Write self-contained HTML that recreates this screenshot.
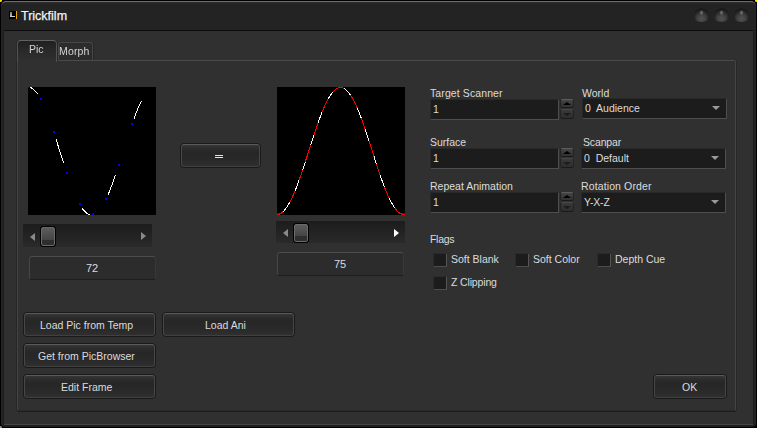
<!DOCTYPE html>
<html><head><meta charset="utf-8">
<style>
*{margin:0;padding:0;box-sizing:border-box}
html,body{width:757px;height:428px;overflow:hidden;background:#000}
#root{position:relative;width:757px;height:428px;background:#000;overflow:hidden;font-family:"Liberation Sans",sans-serif}
.a{position:absolute}
.t{position:absolute;font-size:10.5px;line-height:13px;white-space:pre;color:#dcdcdc}
.win{left:1px;top:1px;width:755px;height:426px;background:linear-gradient(#2e2e2e 0,#232323 2px,#232323);border-radius:5px 5px 4px 4px;border-top:1px solid #6c6c6c}
.content{left:4px;top:31px;width:749px;height:394px;background:#303030;border-bottom:1px solid #444;box-shadow:-1px 0 0 #1c1c1c,1px 0 0 #1e1e1e}
.sep{left:4px;top:30px;width:749px;height:1px;background:#0c0c0c}
.pane{left:17px;top:60px;width:719px;height:351px;border:1px solid #4a4a4a;border-right-color:#454545;border-left-color:#444;border-bottom-color:#2a2a2a;border-radius:2px;box-shadow:-1px 0 0 #262626,1px 0 0 #262626,0 1px 0 #1c1c1c}
.btn{position:absolute;border:1px solid #1a1a1a;border-radius:4px;background:#1a1a1a}
.btn>div{position:absolute;left:0;top:0;right:0;bottom:0;border:1px solid #474747;border-top-color:#5a5a5a;border-bottom-color:#404040;border-radius:3px;background:linear-gradient(#353535 0%,#2a2a2a 20%,#262626 40%,#2a2a2a 75%,#2f2f2f 100%)}
.inp{position:absolute;background:#1c1c1c;border-right:1px solid #4e4e4e;border-bottom:1px solid #4e4e4e;box-shadow:-1px -1px 0 #282828}
.chk{position:absolute;width:13px;height:13px;background:#1c1c1c;border-right:1px solid #555;border-bottom:1px solid #4c4c4c;box-shadow:-1px -1px 0 #2a2a2a}
.track{position:absolute;background:linear-gradient(#1c1c1c,#2a2a2a)}
.thumb{position:absolute;border:1px solid #000;border-radius:3px;background:#000}
.thumb>div{position:absolute;left:0;top:0;right:0;bottom:0;border:1px solid #6a6a6a;border-radius:2px;background:linear-gradient(#5c5c5c 0%,#444 70%,#2e2e2e 70%,#2e2e2e 100%)}
.val{position:absolute;border:1px solid #464646;border-top-color:#4c4c4c;border-bottom-color:#1e1e1e;border-right-color:#383838;border-radius:3px;background:#2c2c2c}
.sphere{position:absolute;width:15px;height:14px;border-radius:50% 50% 42% 42%;background:radial-gradient(ellipse 2.2px 2.6px at 50% 33%,#707070 0,#606060 50%,rgba(60,60,60,0) 100%),radial-gradient(ellipse 8px 7px at 50% 75%,#505050 0%,#474747 40%,#353535 75%,#2a2a2a 100%);box-shadow:inset 0 2px 2px #181818}
</style></head><body><div id="root">
<div class="a win"></div>
<!-- title icon -->
<div class="a" style="left:9px;top:11px;width:8px;height:8px;background:#000"></div>
<div class="a" style="left:10px;top:12px;width:1.6px;height:5px;background:linear-gradient(#7a7a7a,#cfcfcf)"></div>
<div class="a" style="left:10px;top:16px;width:5px;height:1.2px;background:#d0d0d0"></div>
<div class="a" style="left:16px;top:11px;width:1px;height:8px;background:#f0a800"></div>
<div class="t" style="left:21px;top:9px;font-size:12.5px;line-height:14px;color:#f4f4f4;-webkit-text-stroke:0.25px #f4f4f4">Trickfilm</div>
<div class="sphere" style="left:694px;top:8px"></div>
<div class="sphere" style="left:714px;top:8px"></div>
<div class="sphere" style="left:734px;top:8px"></div>
<div class="a sep"></div>
<div class="a content"></div>
<div class="a" style="left:3px;top:425px;width:751px;height:2px;background:#1e1e1e"></div>
<div class="a pane"></div>
<!-- tabs -->
<div class="a" style="left:58px;top:42px;width:35px;height:18px;border:1px solid #464646;border-bottom:none;border-radius:3px 3px 0 0;background:#2c2c2c;box-shadow:1px 0 0 #282828"></div>
<div class="a" style="left:17px;top:40px;width:40px;height:22px;border:1px solid #626262;border-left-color:#525252;border-right-color:#525252;border-bottom:none;border-radius:4px 4px 0 0;background:linear-gradient(#202020,#2a2a2a 50%,#303030);box-shadow:1px 0 0 #282828,-1px 0 0 #282828"></div>
<div class="a" style="left:18px;top:60px;width:38px;height:2px;background:#303030"></div>
<div class="t" style="left:29px;top:43px;color:#d4d4d4;will-change:transform">Pic</div>
<div class="t" style="left:59px;top:45px;color:#d4d4d4;will-change:transform;letter-spacing:0.15px">Morph</div>
<svg width="128" height="128" viewBox="0 0 128 128" style="position:absolute;left:28px;top:87px;background:#000"><path d="M2.00,0.31 L2.50,0.49 L3.00,0.70 L3.50,0.96 L4.00,1.25 L4.50,1.58 L5.00,1.95 L5.50,2.35 L6.00,2.80 L6.50,3.28 L7.00,3.80 L7.50,4.36 L8.00,4.95 L8.50,5.58 L9.00,6.24 L9.50,6.94 M28.00,52.19 L28.50,53.75 L29.00,55.32 L29.50,56.89 L30.00,58.47 L30.50,60.04 L31.00,61.63 L31.50,63.21 L32.00,64.79 L32.50,66.37 L33.00,67.96 L33.50,69.53 L34.00,71.11 L34.50,72.68 L35.00,74.25 L35.50,75.81 M54.00,121.06 L54.50,121.76 L55.00,122.42 L55.50,123.05 L56.00,123.64 L56.50,124.20 L57.00,124.72 L57.50,125.20 L58.00,125.65 L58.50,126.05 L59.00,126.42 L59.50,126.75 L60.00,127.04 L60.50,127.30 L61.00,127.51 L61.50,127.69 M80.00,107.83 L80.50,106.67 L81.00,105.47 L81.50,104.26 L82.00,103.01 L82.50,101.75 L83.00,100.46 L83.50,99.14 L84.00,97.81 L84.50,96.46 L85.00,95.08 L85.50,93.69 L86.00,92.28 L86.50,90.85 L87.00,89.40 L87.50,87.94 M106.00,31.54 L106.50,30.19 L107.00,28.86 L107.50,27.54 L108.00,26.25 L108.50,24.99 L109.00,23.74 L109.50,22.53 L110.00,21.33 L110.50,20.17 L111.00,19.03 L111.50,17.91 L112.00,16.83 L112.50,15.77 L113.00,14.75 L113.50,13.75" stroke="#ffffff" stroke-width="1" fill="none" shape-rendering="crispEdges"/><rect x="-1" y="-1" width="2" height="2" fill="#0000ff"/><rect x="12" y="11" width="2" height="2" fill="#0000ff"/><rect x="25" y="44" width="2" height="2" fill="#0000ff"/><rect x="38" y="85" width="2" height="2" fill="#0000ff"/><rect x="51" y="116" width="2" height="2" fill="#0000ff"/><rect x="64" y="126" width="2" height="2" fill="#0000ff"/><rect x="77" y="111" width="2" height="2" fill="#0000ff"/><rect x="90" y="77" width="2" height="2" fill="#0000ff"/><rect x="103" y="36" width="2" height="2" fill="#0000ff"/></svg>
<svg width="128" height="128" viewBox="0 0 128 128" style="position:absolute;left:277px;top:87px;background:#000"><path d="M0.00,127.50 L0.52,127.48 L1.04,127.42 L1.55,127.31 L2.07,127.17 L2.59,126.98 L3.11,126.75 L3.62,126.48 L4.14,126.17 L4.66,125.82 L5.18,125.43 L5.70,125.00 L6.21,124.52 M12.95,114.90 L13.47,113.92 L13.98,112.90 L14.50,111.85 L15.01,110.77 L15.53,109.66 L16.04,108.52 L16.56,107.36 L17.07,106.16 L17.59,104.94 L18.10,103.69 M21.96,93.57 L22.46,92.16 L22.97,90.73 L23.47,89.28 L23.98,87.82 L24.48,86.34 L24.99,84.85 L25.49,83.35 M28.16,75.21 L28.71,73.51 L29.26,71.80 L29.81,70.09 L30.36,68.37 L30.91,66.65 L31.45,64.93 L32.00,63.21 L32.55,61.49 L33.10,59.76 L33.65,58.05 M37.02,47.63 L37.58,45.95 L38.13,44.29 L38.68,42.64 L39.24,41.01 L39.79,39.39 L40.35,37.80 L40.90,36.22 M45.19,24.81 L45.73,23.50 L46.27,22.22 L46.80,20.97 L47.34,19.74 L47.87,18.55 L48.41,17.40 L48.94,16.27 L49.48,15.18 L50.01,14.12 L50.55,13.10 L51.08,12.11 M56.05,4.77 L56.56,4.21 L57.06,3.69 L57.57,3.21 L58.08,2.77 L58.58,2.37 L59.09,2.00 L59.60,1.68 L60.11,1.39 L60.61,1.15 L61.12,0.94 L61.63,0.77 L62.13,0.64 L62.64,0.56 L63.15,0.51 L63.66,0.50 L64.16,0.53 L64.67,0.61 L65.18,0.72 L65.68,0.87 L66.19,1.06 L66.70,1.29 M73.58,8.24 L74.09,9.02 L74.60,9.84 L75.11,10.69 L75.62,11.57 L76.12,12.49 L76.63,13.44 L77.14,14.42 L77.65,15.43 L78.16,16.47 L78.66,17.55 L79.17,18.65 L79.68,19.78 L80.19,20.94 M84.30,31.26 L84.83,32.70 L85.36,34.16 L85.90,35.65 L86.43,37.15 L86.96,38.68 L87.49,40.22 L88.02,41.78 M92.08,54.08 L92.62,55.77 L93.17,57.48 L93.72,59.18 L94.26,60.89 L94.81,62.61 L95.35,64.32 L95.90,66.04 L96.44,67.75 L96.99,69.46 M99.55,77.39 L100.06,78.97 L100.58,80.54 L101.09,82.10 L101.61,83.65 L102.12,85.18 L102.64,86.70 L103.16,88.21 M107.33,99.72 L107.87,101.11 L108.41,102.48 L108.95,103.82 L109.49,105.13 L110.03,106.41 L110.58,107.67 L111.12,108.89 L111.66,110.07 L112.20,111.23 M118.03,121.35 L118.56,122.04 L119.08,122.69 L119.61,123.31 L120.14,123.88 L120.67,124.41 L121.20,124.90 L121.72,125.35 L122.25,125.76 L122.78,126.12 L123.31,126.44 L123.83,126.72 L124.36,126.96 L124.89,127.15 L125.42,127.31 L125.94,127.41 L126.47,127.48 L127.00,127.50" stroke="#ff0000" stroke-width="1" fill="none" shape-rendering="crispEdges"/><path d="M6.21,124.52 L6.73,124.01 L7.25,123.46 L7.77,122.87 L8.29,122.24 L8.81,121.57 L9.32,120.86 L9.84,120.12 L10.36,119.34 L10.88,118.52 L11.40,117.67 L11.92,116.78 L12.44,115.86 L12.95,114.90 M18.10,103.69 L18.65,102.32 L19.21,100.93 L19.76,99.51 L20.31,98.06 L20.86,96.59 L21.41,95.09 L21.96,93.57 M25.49,83.35 L26.03,81.74 L26.56,80.13 L27.09,78.50 L27.63,76.86 L28.16,75.21 M33.65,58.05 L34.21,56.29 L34.77,54.54 L35.33,52.80 L35.90,51.07 L36.46,49.34 L37.02,47.63 M40.90,36.22 L41.44,34.71 L41.98,33.23 L42.51,31.76 L43.05,30.32 L43.59,28.91 L44.12,27.51 L44.66,26.15 L45.19,24.81 M51.08,12.11 L51.64,11.13 L52.19,10.19 L52.74,9.29 L53.29,8.43 L53.84,7.61 L54.39,6.84 L54.95,6.10 L55.50,5.41 L56.05,4.77 M66.70,1.29 L67.23,1.58 L67.76,1.90 L68.29,2.27 L68.82,2.68 L69.35,3.14 L69.88,3.63 L70.41,4.17 L70.94,4.75 L71.47,5.37 L71.99,6.03 L72.52,6.72 L73.05,7.46 L73.58,8.24 M80.19,20.94 L80.70,22.14 L81.22,23.37 L81.73,24.62 L82.24,25.90 L82.76,27.21 L83.27,28.53 L83.79,29.88 L84.30,31.26 M88.02,41.78 L88.53,43.27 L89.04,44.79 L89.54,46.31 L90.05,47.85 L90.56,49.39 L91.06,50.95 L91.57,52.51 L92.08,54.08 M96.99,69.46 L97.50,71.06 L98.01,72.65 L98.52,74.24 L99.03,75.82 L99.55,77.39 M103.16,88.21 L103.68,89.71 L104.20,91.20 L104.72,92.67 L105.24,94.12 L105.76,95.56 L106.28,96.97 L106.80,98.35 L107.33,99.72 M112.20,111.23 L112.73,112.32 L113.26,113.39 L113.79,114.42 L114.32,115.41 L114.85,116.37 L115.38,117.29 L115.91,118.18 L116.44,119.03 L116.97,119.84 L117.50,120.61 L118.03,121.35" stroke="#ffffff" stroke-width="1" fill="none" shape-rendering="crispEdges"/><rect x="0" y="126.5" width="3" height="1.5" fill="#f00"/><rect x="124" y="126.5" width="4" height="1.5" fill="#f00"/></svg>
<!-- sliders -->
<div class="track" style="left:23px;top:224px;width:129px;height:23px"></div>
<div class="a" style="left:30px;top:233px;width:0;height:0;border-top:4.5px solid transparent;border-bottom:4.5px solid transparent;border-right:5px solid #8a8a8a"></div>
<div class="a" style="left:141px;top:232px;width:0;height:0;border-top:4.5px solid transparent;border-bottom:4.5px solid transparent;border-left:5px solid #8a8a8a"></div>
<div class="thumb" style="left:40px;top:226px;width:16px;height:21px"><div></div></div>
<div class="val" style="left:29px;top:256px;width:127px;height:24px"></div>
<div class="t" style="left:86px;top:262px;font-size:11px">72</div>
<div class="track" style="left:276px;top:221px;width:129px;height:22px"></div>
<div class="a" style="left:283px;top:229px;width:0;height:0;border-top:4.5px solid transparent;border-bottom:4.5px solid transparent;border-right:5px solid #8a8a8a"></div>
<div class="a" style="left:394px;top:229px;width:0;height:0;border-top:4.5px solid transparent;border-bottom:4.5px solid transparent;border-left:5px solid #ffffff"></div>
<div class="thumb" style="left:293px;top:223px;width:16px;height:20px"><div></div></div>
<div class="val" style="left:277px;top:252px;width:127px;height:24px"></div>
<div class="t" style="left:334px;top:258px;font-size:11px">75</div>
<!-- = button -->
<div class="btn" style="left:180px;top:143px;width:81px;height:25px"><div></div></div>
<div class="a" style="left:215px;top:155px;width:8px;height:1px;background:#e4e4e4"></div><div class="a" style="left:215px;top:157px;width:8px;height:1px;background:#e4e4e4"></div>
<!-- form -->
<div class="t" style="left:430px;top:87px;letter-spacing:0.1px">Target Scanner</div>
<div class="inp" style="left:431px;top:100px;width:128px;height:20px"></div>
<div class="t" style="left:433px;top:103px">1</div>
<div class="t" style="left:582px;top:87px">World</div>
<div class="inp" style="left:583px;top:99px;width:144px;height:20px"></div>
<div class="t" style="left:585px;top:102px">0  Audience</div>
<div class="t" style="left:430px;top:136px">Surface</div>
<div class="inp" style="left:431px;top:149px;width:128px;height:20px"></div>
<div class="t" style="left:433px;top:152px">1</div>
<div class="t" style="left:583px;top:136px;letter-spacing:-0.15px">Scanpar</div>
<div class="inp" style="left:582px;top:149px;width:144px;height:20px"></div>
<div class="t" style="left:584px;top:152px">0  Default</div>
<div class="t" style="left:430px;top:180px">Repeat Animation</div>
<div class="inp" style="left:431px;top:193px;width:128px;height:20px"></div>
<div class="t" style="left:433px;top:196px">1</div>
<div class="t" style="left:581px;top:180px;letter-spacing:0.12px">Rotation Order</div>
<div class="inp" style="left:582px;top:193px;width:144px;height:20px"></div>
<div class="t" style="left:584px;top:196px;letter-spacing:-0.15px">Y-X-Z</div>
<div class="a" style="left:560px;top:99px;width:14px;height:9px;border-radius:3px;border:1px solid #222;border-top:1px solid #5c5c5c;border-bottom:1px solid #1a1a1a;background:linear-gradient(#454545,#393939 50%,#333)"></div><div class="a" style="left:563px;top:102px;width:0;height:0;border-left:4px solid transparent;border-right:4px solid transparent;border-bottom:3.5px solid #000"></div><div class="a" style="left:560px;top:109px;width:14px;height:10px;border-radius:3px;border:1px solid #222;border-top:1px solid #474747;border-bottom:1px solid #1a1a1a;background:linear-gradient(#3a3a3a,#323232 50%,#2e2e2e)"></div><div class="a" style="left:563px;top:113px;width:0;height:0;border-left:4px solid transparent;border-right:4px solid transparent;border-top:3px solid #1c1c1c"></div>
<div class="a" style="left:560px;top:148px;width:14px;height:9px;border-radius:3px;border:1px solid #222;border-top:1px solid #5c5c5c;border-bottom:1px solid #1a1a1a;background:linear-gradient(#454545,#393939 50%,#333)"></div><div class="a" style="left:563px;top:151px;width:0;height:0;border-left:4px solid transparent;border-right:4px solid transparent;border-bottom:3.5px solid #000"></div><div class="a" style="left:560px;top:158px;width:14px;height:10px;border-radius:3px;border:1px solid #222;border-top:1px solid #474747;border-bottom:1px solid #1a1a1a;background:linear-gradient(#3a3a3a,#323232 50%,#2e2e2e)"></div><div class="a" style="left:563px;top:162px;width:0;height:0;border-left:4px solid transparent;border-right:4px solid transparent;border-top:3px solid #1c1c1c"></div>
<div class="a" style="left:560px;top:192px;width:14px;height:9px;border-radius:3px;border:1px solid #222;border-top:1px solid #5c5c5c;border-bottom:1px solid #1a1a1a;background:linear-gradient(#454545,#393939 50%,#333)"></div><div class="a" style="left:563px;top:195px;width:0;height:0;border-left:4px solid transparent;border-right:4px solid transparent;border-bottom:3.5px solid #000"></div><div class="a" style="left:560px;top:202px;width:14px;height:10px;border-radius:3px;border:1px solid #222;border-top:1px solid #474747;border-bottom:1px solid #1a1a1a;background:linear-gradient(#3a3a3a,#323232 50%,#2e2e2e)"></div><div class="a" style="left:563px;top:206px;width:0;height:0;border-left:4px solid transparent;border-right:4px solid transparent;border-top:3px solid #1c1c1c"></div>

<div class="a" style="left:712px;top:106px;width:0;height:0;border-left:4.5px solid transparent;border-right:4.5px solid transparent;border-top:4.5px solid #9a9a9a"></div>
<div class="a" style="left:711px;top:156px;width:0;height:0;border-left:4.5px solid transparent;border-right:4.5px solid transparent;border-top:4.5px solid #9a9a9a"></div>
<div class="a" style="left:711px;top:200px;width:0;height:0;border-left:4.5px solid transparent;border-right:4.5px solid transparent;border-top:4.5px solid #9a9a9a"></div>

<div class="t" style="left:430px;top:233px;letter-spacing:-0.3px">Flags</div>
<div class="chk" style="left:434px;top:254px"></div>
<div class="t" style="left:451px;top:253px">Soft Blank</div>
<div class="chk" style="left:516px;top:254px"></div>
<div class="t" style="left:533px;top:253px">Soft Color</div>
<div class="chk" style="left:598px;top:254px"></div>
<div class="t" style="left:615px;top:253px">Depth Cue</div>
<div class="chk" style="left:434px;top:277px"></div>
<div class="t" style="left:451px;top:276px;letter-spacing:-0.15px">Z Clipping</div>
<!-- bottom buttons -->
<div class="btn" style="left:23px;top:312px;width:133px;height:25px"><div></div></div>
<div class="t" style="left:40px;top:319px">Load Pic from Temp</div>
<div class="btn" style="left:162px;top:312px;width:133px;height:25px"><div></div></div>
<div class="t" style="left:205px;top:319px">Load Ani</div>
<div class="btn" style="left:23px;top:343px;width:133px;height:25px"><div></div></div>
<div class="t" style="left:38px;top:350px">Get from PicBrowser</div>
<div class="btn" style="left:23px;top:374px;width:133px;height:25px"><div></div></div>
<div class="t" style="left:61px;top:381px">Edit Frame</div>
<div class="btn" style="left:653px;top:374px;width:74px;height:25px"><div></div></div>
<div class="t" style="left:682px;top:381px">OK</div>
<div class="a" style="left:-1px;top:-1px;width:3px;height:3px;background:#ffe000;border-radius:50%"></div>
<div class="a" style="left:-1px;top:426px;width:3px;height:3px;background:#909090;border-radius:50%"></div>
<div class="a" style="left:755px;top:-1px;width:3px;height:3px;background:#ffe000;border-radius:50%"></div>
</div></body></html>
